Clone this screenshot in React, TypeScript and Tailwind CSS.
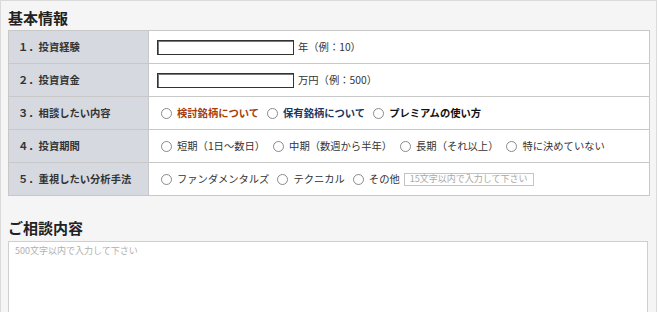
import React from 'react';

const font = { fontFamily: '"Noto Sans CJK JP", "Noto Sans", sans-serif' };

// one round radio option with its label
const Radio = ({ label, className = '' }: { label: string; className?: string }) => (
  <span className="flex items-center mr-[8px]">
    <span className="w-[11px] h-[11px] rounded-full border border-[#8a8a8a] bg-white mr-[5px] shrink-0" />
    <span className={className}>{label}</span>
  </span>
);

const Row = ({ label, children }: { label: string; children: React.ReactNode }) => (
  <div className="flex h-[33px] border-b border-[#c8c8c8]">
    <div className="w-[140px] shrink-0 bg-[#d6dae0] border-r border-[#c8c8c8] flex items-center pl-[9px] font-bold text-[#333]">
      {label}
    </div>
    <div className="flex-1 bg-white flex items-center pl-[8px] text-[#333]">{children}</div>
  </div>
);

export default function App() {
  return (
    <div
      className="w-[657px] h-[312px] overflow-hidden bg-[#f5f5f5] border-t border-l border-r border-[#dadada] pl-[7px]"
      style={font}
    >
      <h2 className="pt-[7px] mb-[2px] text-[15px] leading-[20px] font-bold text-[#222]">基本情報</h2>

      <div className="w-[642px] border-t border-l border-r border-[#c8c8c8] text-[10.3px]">
        <Row label="１．投資経験">
          <span className="w-[137px] h-[15px] border border-[#333] shadow-[inset_1px_1px_0_#777] bg-white mr-[4px]" />
          <span>年（例：10）</span>
        </Row>
        <Row label="２．投資資金">
          <span className="w-[137px] h-[15px] border border-[#333] shadow-[inset_1px_1px_0_#777] bg-white mr-[4px]" />
          <span>万円（例：500）</span>
        </Row>
        <Row label="３．相談したい内容">
          <span className="flex items-center ml-[4px] font-bold">
            <Radio label="検討銘柄について" className="text-[#a63c0c]" />
            <Radio label="保有銘柄について" className="text-[#1c3663]" />
            <Radio label="プレミアムの使い方" className="text-[#111]" />
          </span>
        </Row>
        <Row label="４．投資期間">
          <span className="flex items-center ml-[4px]">
            <Radio label="短期（1日～数日）" />
            <Radio label="中期（数週から半年）" />
            <Radio label="長期（それ以上）" />
            <Radio label="特に決めていない" />
          </span>
        </Row>
        <Row label="５．重視したい分析手法">
          <span className="flex items-center ml-[4px]">
            <Radio label="ファンダメンタルズ" />
            <Radio label="テクニカル" />
            <span className="flex items-center">
              <span className="w-[11px] h-[11px] rounded-full border border-[#8a8a8a] bg-white mr-[5px] shrink-0" />
              <span className="mr-[4px]">その他</span>
              <span className="w-[130px] h-[13px] border border-[#c4c4c4] bg-white flex items-center pl-[5px] text-[9px] text-[#a8a8a8]">
                15文字以内で入力して下さい
              </span>
            </span>
          </span>
        </Row>
      </div>

      <h2 className="mt-[22px] mb-[3px] text-[15px] leading-[20px] font-bold text-[#222]">ご相談内容</h2>
      <textarea
        className="block w-[640px] h-[100px] resize-none border border-[#cfcfcf] bg-white px-[6px] py-[2px] text-[9px] placeholder:text-[#b0b0b0] outline-none"
        style={font}
        placeholder="500文字以内で入力して下さい"
      />
    </div>
  );
}
